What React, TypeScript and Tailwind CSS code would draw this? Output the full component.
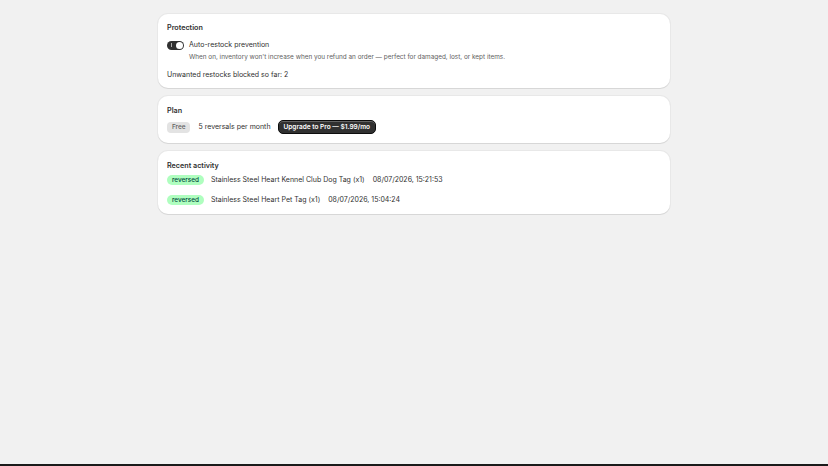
import type { ReactNode } from "react";

const activity = [
  { product: "Stainless Steel Heart Kennel Club Dog Tag (x1)", at: "08/07/2026, 15:21:53" },
  { product: "Stainless Steel Heart Pet Tag (x1)", at: "08/07/2026, 15:04:24" },
];

function Card({ title, className = "", children }: { title: string; className?: string; children: ReactNode }) {
  return (
    <section
      className={`rounded-[10px] bg-white px-[9px] shadow-[0_1px_0_0_rgba(26,26,26,0.08),0_0_0_1px_rgba(26,26,26,0.04)] ${className}`}
    >
      <h2 className="text-[7.2px] font-semibold leading-[12px] text-[#303030]">{title}</h2>
      {children}
    </section>
  );
}

function Toggle() {
  return (
    <span className="relative inline-flex h-[9px] w-[17px] shrink-0 items-center rounded-full bg-[#303030]">
      <span className="absolute left-[4px] top-[2.5px] h-[4px] w-[1px] bg-white/60" />
      <span className="absolute right-[1px] top-[1px] h-[7px] w-[7px] rounded-full bg-white" />
    </span>
  );
}

export default function App() {
  return (
    <div className="flex min-h-screen flex-col bg-[#f1f1f1] font-['Inter',sans-serif] text-[#303030]">
      <main className="mx-auto flex w-[512px] flex-1 flex-col gap-[8px] pt-[14px]">
        <Card title="Protection" className="pt-[8px] pb-[7px]">
          <div className="mt-[5px] flex items-center gap-[5px]">
            <Toggle />
            <span className="text-[7px] leading-[12px]">Auto-restock prevention</span>
          </div>
          <p className="pl-[22px] text-[6.4px] leading-[12px] text-[#616161]">
            When on, inventory won't increase when you refund an order — perfect for damaged, lost, or kept items.
          </p>
          <p className="mt-[6px] text-[7px] leading-[12px]">Unwanted restocks blocked so far: 2</p>
        </Card>

        <Card title="Plan" className="pt-[9px] pb-[9px]">
          <div className="mt-[3px] flex items-center">
            <span className="rounded-[4px] bg-[#e3e3e3] px-[5px] text-[6.4px] font-medium leading-[11px] text-[#616161]">Free</span>
            <span className="ml-[8px] text-[7px] leading-[12px]">5 reversals per month</span>
            <button className="ml-[7px] h-[14px] rounded-[5px] border border-[#0c0c0c] bg-[#303030] px-[5px] text-[6.5px] font-semibold leading-[12px] text-white shadow-[inset_0_1px_0_0_rgba(255,255,255,0.25)]">
              Upgrade to Pro — $1.99/mo
            </button>
          </div>
        </Card>

        <Card title="Recent activity" className="pt-[9px] pb-[8px]">
          <ul className="mt-[2px] flex flex-col gap-[8px]">
            {activity.map((a) => (
              <li key={a.at} className="flex items-center">
                <span className="rounded-[5px] bg-[#affebf] px-[5px] text-[6.4px] font-medium leading-[10px] text-[#014b40]">reversed</span>
                <span className="ml-[7px] text-[7px] leading-[12px]">{a.product}</span>
                <span className="ml-[8px] text-[7px] leading-[12px]">{a.at}</span>
              </li>
            ))}
          </ul>
        </Card>
      </main>
      <div className="h-[2px] bg-[#1a1a1a]" />
    </div>
  );
}
